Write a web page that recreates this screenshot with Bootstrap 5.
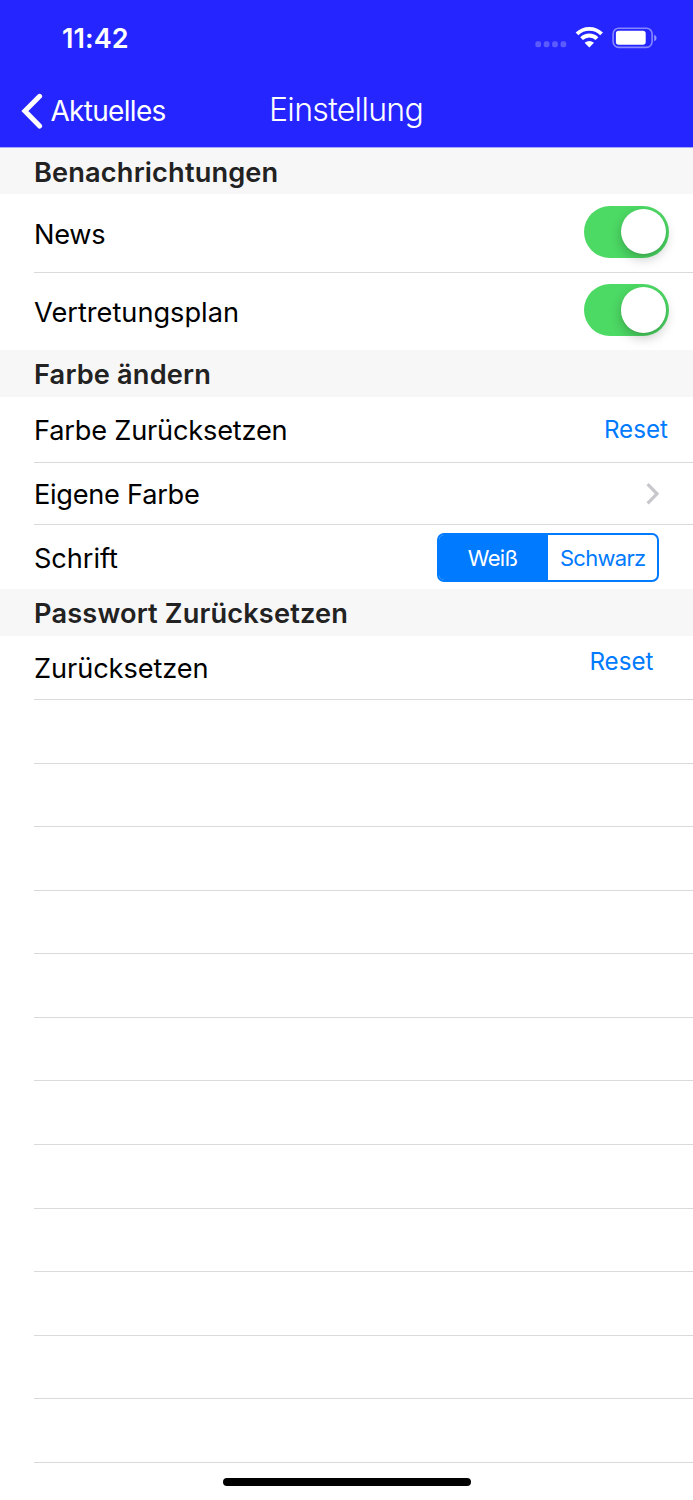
<!DOCTYPE html>
<html lang="de">
<head>
<meta charset="utf-8">
<meta name="viewport" content="width=device-width, initial-scale=1">
<title>Einstellung</title>
<link href="https://cdn.jsdelivr.net/npm/bootstrap@5.3.0/dist/css/bootstrap.min.css" rel="stylesheet">
<style>
  body { font-family: Inter, "Liberation Sans", sans-serif; font-size: 27.2px; line-height: 32px; color: #000; background: #fff; }
  .app-head { background: #2525ff; border-bottom: 1px solid #a8a8fb; height: 148px; color: #fff; }
  .status-bar { height: 76px; padding: 0 36px 0 62px; }
  .clock { font-size: 27px; font-weight: 600; letter-spacing: .07px; padding-top: 2px; }
  .title-bar { height: 71px; padding-left: 21px; }
  .back-link { color: #fff; font-size: 28px; letter-spacing: -.68px; gap: 6.4px; width: 248px; }
  .back-link span { padding-bottom: 2px; }
  .page-title { font-size: 32px; font-weight: 300; letter-spacing: -.68px; padding-bottom: 4px; }
  .section-head { background: #f7f7f7; color: #222; font-size: 27.2px; font-weight: 600; letter-spacing: .15px; height: 47px; padding: 4px 0 0 34px; margin: 0; }
  .section-head.first { height: 46px; }
  .setting { margin-left: 34px; border-bottom: 1px solid #dadadc; height: 63.58px; padding-top: 1px; }
  .setting > span:first-child { letter-spacing: -.08px; padding-top: 2px; }
  .h-news { height: 79px; } .h-plan { height: 77px; border: 0; } .h-color { height: 66px; }
  .h-own { height: 62px; } .h-font { height: 64px; border: 0; } .h-pass { height: 64px; }
  .setting > .tight:first-child { letter-spacing: -.28px; }
  .setting > .wider:first-child { letter-spacing: 0; }
  .h-color > span:first-child { letter-spacing: -.2px; }
  .reset { color: #007aff; font-size: 24.2px; margin-right: 25px; }
  .h-pass .reset { margin: 0 39.5px 12px 0; }
  .toggle { width: 85.4px; height: 52px; border-radius: 26px; background: #4cd964; margin-right: 23.6px; padding: 3.2px; }
  .knob { width: 45.4px; height: 45.4px; border-radius: 50%; background: #fff; box-shadow: 0 5px 12px rgba(0,0,0,.22), 0 1px 2px rgba(0,0,0,.08); }
  .segments { width: 222.4px; height: 48.4px; margin-right: 33.7px; border: 2px solid #007aff; border-radius: 7px; overflow: hidden; color: #007aff; font-size: 22px; letter-spacing: -.7px; }
  .segments span { width: 50%; padding-top: 1px; }
  .segments .on { background: #007aff; color: #fff; padding-right: 2px; }
  .home-bar { width: 248px; height: 8.4px; border-radius: 5px; background: #000; margin-top: 14.8px; }
</style>
</head>
<body>
<header class="app-head">
  <div class="status-bar d-flex justify-content-between align-items-center">
    <span class="clock">11:42</span>
    <svg width="122" height="26" viewBox="0 0 122 26">
      <g fill="#fff" fill-opacity=".25">
        <rect x=".4" y="16.3" width="5.6" height="6" rx="2"/><rect x="8.8" y="16.3" width="5.6" height="6" rx="2"/>
        <rect x="17.2" y="16.3" width="5.6" height="6" rx="2"/><rect x="25.6" y="16.3" width="5.6" height="6" rx="2"/>
      </g>
      <g fill="none" stroke="#fff" stroke-width="3.9">
        <path d="M42 8.9A17.6 17.6 0 0 1 66.6 8.9"/>
        <path d="M46.6 13.7A11 11 0 0 1 62 13.7"/>
      </g>
      <path fill="#fff" d="M49.6 17.8Q54.3 14 59 17.8L54.3 22.4Z"/>
      <rect x="78.1" y="3.2" width="39" height="19.2" rx="5.6" fill="none" stroke="#fff" stroke-opacity=".45" stroke-width="1.6"/>
      <rect x="80.9" y="5.8" width="29.8" height="14" rx="2.8" fill="#fff"/>
      <path d="M119.2 9.7q2.4 1 2.4 3.3t-2.4 3.3z" fill="#fff" fill-opacity=".5"/>
    </svg>
  </div>
  <nav class="title-bar d-flex align-items-center">
    <a class="back-link d-flex align-items-center text-decoration-none" href="#">
      <svg width="23" height="38" viewBox="0 0 23 38"><path d="M18.6 3.3 3.9 18 18.6 33" fill="none" stroke="#fff" stroke-width="5" stroke-linecap="round" stroke-linejoin="miter"/></svg>
      <span>Aktuelles</span>
    </a>
    <span class="page-title">Einstellung</span>
  </nav>
</header>
<main>
  <h2 class="section-head first d-flex align-items-center">Benachrichtungen</h2>
  <div class="setting h-news d-flex justify-content-between align-items-center"><span class="tight">News</span><div class="toggle d-flex justify-content-end mb-1"><div class="knob"></div></div></div>
  <div class="setting h-plan d-flex justify-content-between align-items-center"><span class="wider">Vertretungsplan</span><div class="toggle d-flex justify-content-end mb-1"><div class="knob"></div></div></div>
  <h2 class="section-head d-flex align-items-center">Farbe ändern</h2>
  <div class="setting h-color d-flex justify-content-between align-items-center"><span>Farbe Zurücksetzen</span><span class="reset">Reset</span></div>
  <div class="setting h-own d-flex justify-content-between align-items-center"><span class="tight">Eigene Farbe</span><svg width="48" height="24" viewBox="0 0 48 24"><path d="m2.6 2.2 9.4 9.6-9.4 9.6" fill="none" stroke="#c7c7cc" stroke-width="3.2"/></svg></div>
  <div class="setting h-font d-flex justify-content-between align-items-center"><span>Schrift</span>
    <div class="segments d-flex"><span class="on d-flex align-items-center justify-content-center">Weiß</span><span class="d-flex align-items-center justify-content-center">Schwarz</span></div></div>
  <h2 class="section-head d-flex align-items-center">Passwort Zurücksetzen</h2>
  <div class="setting h-pass d-flex justify-content-between align-items-center"><span>Zurücksetzen</span><span class="reset">Reset</span></div>
  <div class="setting"></div><div class="setting"></div><div class="setting"></div><div class="setting"></div>
  <div class="setting"></div><div class="setting"></div><div class="setting"></div><div class="setting"></div>
  <div class="setting"></div><div class="setting"></div><div class="setting"></div><div class="setting"></div>
</main>
<div class="home-bar mx-auto"></div>
<script src="https://cdn.jsdelivr.net/npm/bootstrap@5.3.0/dist/js/bootstrap.bundle.min.js"></script>
</body>
</html>
